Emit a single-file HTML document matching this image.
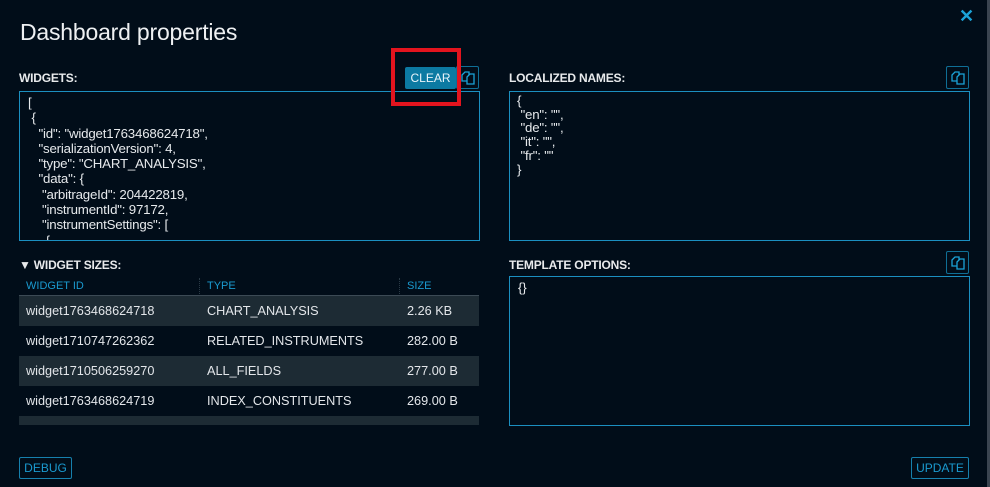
<!DOCTYPE html>
<html><head><style>
*{margin:0;padding:0;box-sizing:border-box}
body{width:990px;height:487px;background:#010d19;font-family:"Liberation Sans",sans-serif;color:#e6e9ec;position:relative;overflow:hidden}
.a{position:absolute}
.lbl{font-size:12px;font-weight:bold;color:#e8eaec;letter-spacing:-0.2px}
.ta{border:1px solid #1b8fc0;background:#010d19}
.code{font-size:13.3px;line-height:15.3px;white-space:pre;color:#e6e9ec;letter-spacing:-0.2px}
.icon{width:23px;height:23px;border:1px solid #0f6f96;border-radius:2px}
.icon svg{position:absolute;left:3px;top:3px}
.row{position:absolute;left:19px;width:460px;height:30px;font-size:12.7px;color:#e3e6ea}
.row span{position:absolute;top:8px}
.btn{border:1px solid #1680ad;color:#1a9ad0;font-size:12px;text-align:center;line-height:20px;border-radius:2px}
</style></head><body>
<div class="a" style="right:0;top:0;width:3px;height:487px;background:#3a4450"></div>
<div class="a" style="left:20px;top:19px;font-size:23px;color:#eef0f2;letter-spacing:-0.2px">Dashboard properties</div>
<div class="a" style="left:959px;top:6px;font-size:18px;color:#1ba3d8;font-weight:bold">✕</div>

<div class="a lbl" style="left:19px;top:71px">WIDGETS:</div>
<div class="a" style="left:405px;top:67px;width:51px;height:22px;background:#0c7aa2;border-radius:2px;font-size:12px;color:#e8f4fa;text-align:center;line-height:22px">CLEAR</div>
<div class="a icon" style="left:456px;top:66px;width:23px"><svg width="16" height="16" viewBox="0 0 16 16" fill="none" stroke="#1ba3d8" stroke-width="1.3"><path d="M2 5l3-3h4v9H2z"/><path d="M7 7l3-3h4v10H7z" fill="#010d19"/></svg></div>
<div class="a ta" style="left:19px;top:91px;width:461px;height:150px;overflow:hidden">
<div class="code" style="padding:3px 0 0 8px">[
 {
   "id": "widget1763468624718",
   "serializationVersion": 4,
   "type": "CHART_ANALYSIS",
   "data": {
    "arbitrageId": 204422819,
    "instrumentId": 97172,
    "instrumentSettings": [
     {
      "id": "mainSeries",</div></div>

<div class="a lbl" style="left:509px;top:71px">LOCALIZED NAMES:</div>
<div class="a icon" style="left:946px;top:66px"><svg width="16" height="16" viewBox="0 0 16 16" fill="none" stroke="#1ba3d8" stroke-width="1.3"><path d="M2 5l3-3h4v9H2z"/><path d="M7 7l3-3h4v10H7z" fill="#010d19"/></svg></div>
<div class="a ta" style="left:509px;top:91px;width:461px;height:150px">
<div class="code" style="padding:2px 0 0 7px;line-height:13.7px">{
 "en": "",
 "de": "",
 "it": "",
 "fr": ""
}</div></div>

<div class="a lbl" style="left:19px;top:258px">▼ WIDGET SIZES:</div>
<div class="a" style="left:19px;top:276px;width:460px;height:20px;border-bottom:1px solid #3c4a55;font-size:11px;color:#1a9ad0">
<span class="a" style="left:7px;top:4px">WIDGET ID</span>
<span class="a" style="left:188px;top:4px">TYPE</span>
<span class="a" style="left:388px;top:4px">SIZE</span>
<span class="a" style="left:180px;top:2px;height:16px;border-left:1px dotted #2a3a46"></span>
<span class="a" style="left:380px;top:2px;height:16px;border-left:1px dotted #2a3a46"></span>
</div>
<div class="row" style="top:296px;background:#1d2b34"><span style="left:7px">widget1763468624718</span><span style="left:188px">CHART_ANALYSIS</span><span style="left:388px">2.26 KB</span></div>
<div class="row" style="top:326px"><span style="left:7px">widget1710747262362</span><span style="left:188px">RELATED_INSTRUMENTS</span><span style="left:388px">282.00 B</span></div>
<div class="row" style="top:356px;background:#1d2b34"><span style="left:7px">widget1710506259270</span><span style="left:188px">ALL_FIELDS</span><span style="left:388px">277.00 B</span></div>
<div class="row" style="top:386px"><span style="left:7px">widget1763468624719</span><span style="left:188px">INDEX_CONSTITUENTS</span><span style="left:388px">269.00 B</span></div>
<div class="row" style="top:416px;height:9px;background:#1d2b34"></div>

<div class="a lbl" style="left:509px;top:258px">TEMPLATE OPTIONS:</div>
<div class="a icon" style="left:946px;top:251px"><svg width="16" height="16" viewBox="0 0 16 16" fill="none" stroke="#1ba3d8" stroke-width="1.3"><path d="M2 5l3-3h4v9H2z"/><path d="M7 7l3-3h4v10H7z" fill="#010d19"/></svg></div>
<div class="a ta" style="left:509px;top:276px;width:461px;height:150px"><div class="code" style="padding:3px 0 0 8px">{}</div></div>

<div class="a btn" style="left:19px;top:457px;width:53px;height:22px">DEBUG</div>
<div class="a btn" style="left:911px;top:457px;width:58px;height:22px">UPDATE</div>
<div class="a" style="left:391px;top:48px;width:70px;height:58px;border:4px solid #e3141e;z-index:5"></div>
</body></html>
